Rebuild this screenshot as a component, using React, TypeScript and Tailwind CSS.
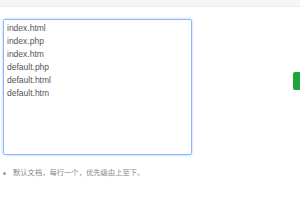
import React from 'react';

const defaultDocs = ['index.html', 'index.php', 'index.htm', 'default.php', 'default.html', 'default.htm'];

function App() {
  return (
    <div className="relative w-[300px] h-[200px] bg-white overflow-hidden" style={{ fontFamily: '"Liberation Sans", "Noto Sans CJK SC", sans-serif' }}>
      <div className="h-[7px] bg-[#f6f6f6] border-b border-[#ececec]" />

      <div className="flex items-start">
        <textarea
          className="ml-[3px] mt-[12px] w-[189px] h-[136px] resize-none px-[3px] py-[2px] text-[8.5px] leading-[13px] text-[#555] border border-[#8cb8f5] rounded-[2px] outline-none shadow-[0_0_3px_#a9cdfb]"
          defaultValue={defaultDocs.join('\n')}
        />
      </div>

      <div className="absolute right-0 top-[72px] w-[7px] h-[18px] bg-[#20a53a] rounded-l-[2px]" />

      <ul className="mt-[13px] ml-[3px] text-[7.3px] leading-[10px] text-[#888]">
        <li className="flex items-center gap-[7px]">
          <span className="w-[3px] h-[3px] rounded-full bg-[#999]" />
          默认文档，每行一个，优先级由上至下。
        </li>
      </ul>
    </div>
  );
}

export default App;
